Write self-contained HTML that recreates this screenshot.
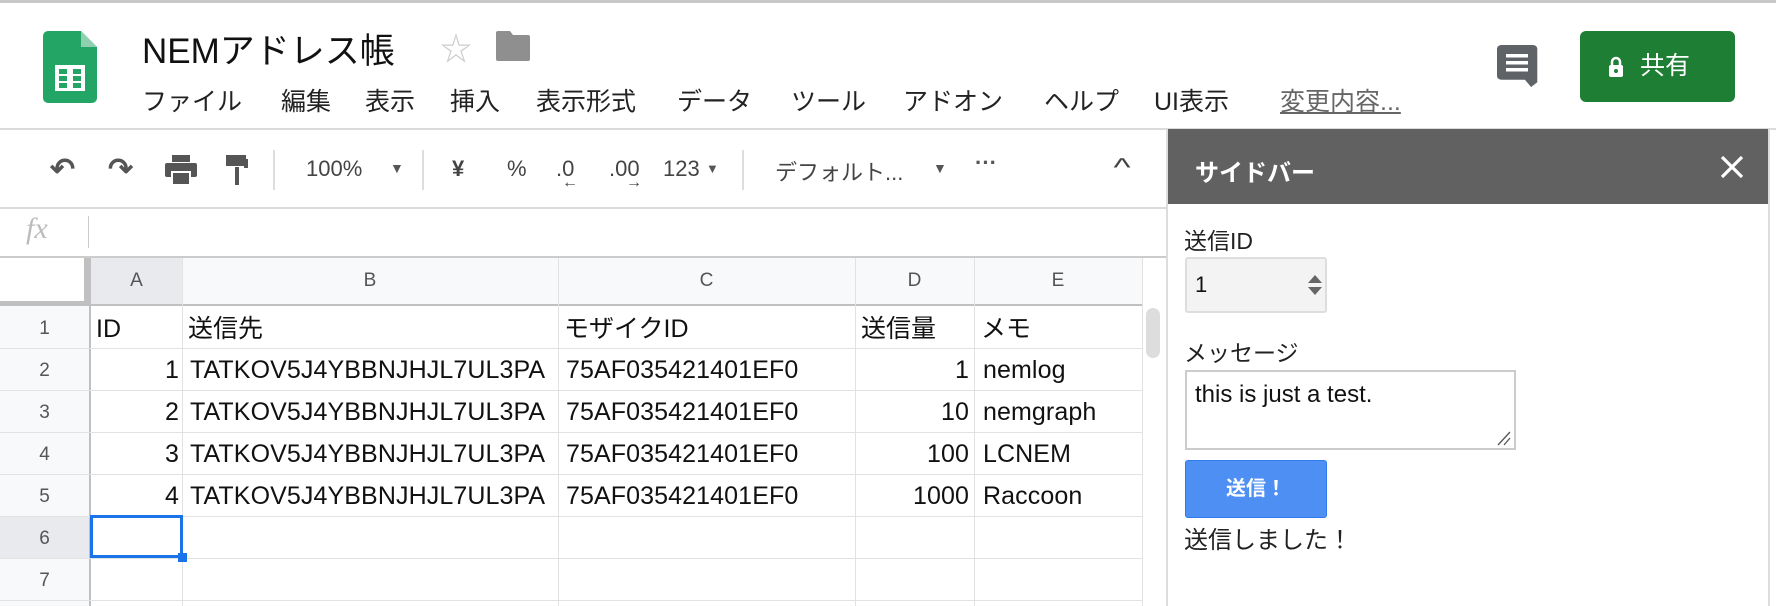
<!DOCTYPE html>
<html><head><meta charset="utf-8"><style>
*{box-sizing:border-box;margin:0;padding:0}
body{width:1776px;height:606px;overflow:hidden;background:#fff;font-family:"Liberation Sans","Noto Sans CJK JP",sans-serif;color:#222;position:relative}
.a{position:absolute;white-space:nowrap}
.menu span{position:absolute;top:82px;font-size:25px;color:#222}
.cell{position:absolute;font-size:23px;color:#111;line-height:42px;overflow:hidden;white-space:nowrap}
.n{font-size:25px;letter-spacing:0.1px}
.hl{position:absolute;background:#e2e2e2}
</style></head><body>
<div class="a" style="left:0;top:0;width:1776px;height:3px;background:#c8c8c8"></div>
<svg class="a" style="left:43px;top:31px" width="54" height="72" viewBox="0 0 54 72">
<path d="M5 0H38L54 16V67a5 5 0 0 1-5 5H5a5 5 0 0 1-5-5V5a5 5 0 0 1 5-5z" fill="#23a566"/>
<path d="M38 0V16H54z" fill="#8ed1b1"/>
<rect x="12" y="34" width="30" height="26" fill="#fff"/>
<rect x="16" y="38" width="8" height="5" fill="#23a566"/><rect x="30" y="38" width="8" height="5" fill="#23a566"/>
<rect x="16" y="45" width="8" height="5" fill="#23a566"/><rect x="30" y="45" width="8" height="5" fill="#23a566"/>
<rect x="16" y="52" width="8" height="5" fill="#23a566"/><rect x="30" y="52" width="8" height="5" fill="#23a566"/>
</svg>
<div class="a" style="left:142px;top:23px;font-size:35px;color:#111">NEMアドレス帳</div>
<div class="a" style="left:440px;top:24px;font-size:32px;color:#ccc">☆</div>
<svg class="a" style="left:496px;top:31px" width="34" height="30" viewBox="0 0 34 30"><path d="M2 0h12l3 4h15a2 2 0 0 1 2 2v22a2 2 0 0 1-2 2H2a2 2 0 0 1-2-2V2a2 2 0 0 1 2-2z" fill="#8f8f8f"/></svg>
<div class="menu">
<span style="left:142px">ファイル</span><span style="left:281px">編集</span><span style="left:365px">表示</span><span style="left:450px">挿入</span><span style="left:536px">表示形式</span><span style="left:677px">データ</span><span style="left:791px">ツール</span><span style="left:903px">アドオン</span><span style="left:1044px">ヘルプ</span><span style="left:1154px">UI表示</span>
<span style="left:1280px;color:#666;text-decoration:underline">変更内容...</span>
</div>
<svg class="a" style="left:1497px;top:45px" width="42" height="42" viewBox="0 0 42 42"><path d="M3 0h20a3 3 0 0 1 3 3v28l-4 4-4-6H3a3 3 0 0 1-3-3V3a3 3 0 0 1 3-3z" fill="#5f6368" transform="scale(1.55,1.2)"/><rect x="9" y="9" width="22" height="3.5" fill="#fff"/><rect x="9" y="16" width="22" height="3.5" fill="#fff"/><rect x="9" y="23" width="22" height="3.5" fill="#fff"/></svg>
<div class="a" style="left:1580px;top:31px;width:155px;height:71px;background:#1e7e34;border-radius:6px;color:#fff;font-size:25px;line-height:71px;padding-left:60px">共有</div>
<svg class="a" style="left:1608px;top:56px" width="16" height="21" viewBox="0 0 16 21"><path d="M4 9V6a4 4 0 0 1 8 0v3" stroke="#fff" stroke-width="2.5" fill="none"/><rect x="1" y="9" width="14" height="12" rx="2" fill="#fff"/><circle cx="8" cy="15" r="2" fill="#1e7e34"/></svg>
<div class="a" style="left:0;top:128px;width:1776px;height:2px;background:#dadada"></div>
<div class="a" style="left:50px;top:152px;font-size:30px;color:#555;font-weight:bold">↶</div>
<div class="a" style="left:108px;top:152px;font-size:30px;color:#555;font-weight:bold">↷</div>
<svg class="a" style="left:165px;top:155px" width="32" height="30"><rect x="7" y="0" width="18" height="7" fill="#555"/><rect x="0" y="8" width="32" height="14" rx="2" fill="#555"/><rect x="7" y="17" width="18" height="13" fill="#555" stroke="#fff" stroke-width="2"/></svg>
<svg class="a" style="left:226px;top:155px" width="22" height="30"><rect x="0" y="0" width="20" height="11" fill="#555"/><rect x="18" y="4" width="4" height="9" fill="#555"/><rect x="9" y="12" width="4" height="18" fill="#555"/></svg>
<div class="a" style="left:273px;top:150px;width:2px;height:40px;background:#ddd"></div>
<div class="a" style="left:306px;top:156px;font-size:22px;color:#444">100%</div>
<div class="a" style="left:390px;top:160px;font-size:14px;color:#555">▼</div>
<div class="a" style="left:422px;top:150px;width:2px;height:40px;background:#ddd"></div>
<div class="a" style="left:452px;top:156px;font-size:22px;color:#444;font-weight:bold">¥</div>
<div class="a" style="left:507px;top:156px;font-size:22px;color:#444">%</div>
<div class="a" style="left:556px;top:156px;font-size:22px;color:#444">.0</div>
<div class="a" style="left:562px;top:174px;font-size:16px;color:#444">←</div>
<div class="a" style="left:609px;top:156px;font-size:22px;color:#444">.00</div>
<div class="a" style="left:626px;top:174px;font-size:16px;color:#444">→</div>
<div class="a" style="left:663px;top:156px;font-size:22px;color:#444">123</div>
<div class="a" style="left:706px;top:161px;font-size:13px;color:#555">▼</div>
<div class="a" style="left:742px;top:150px;width:2px;height:40px;background:#ddd"></div>
<div class="a" style="left:775px;top:155px;font-size:22px;color:#444">デフォルト...</div>
<div class="a" style="left:933px;top:160px;font-size:14px;color:#555">▼</div>
<div class="a" style="left:975px;top:150px;font-size:22px;color:#555;font-weight:bold">···</div>
<div class="a" style="left:1116px;top:152px;font-size:26px;color:#444;transform:scaleX(1.4)">^</div>
<div class="a" style="left:0;top:207px;width:1167px;height:2px;background:#dadada"></div>
<div class="a" style="left:26px;top:212px;font-size:30px;color:#bbb;font-family:'Liberation Serif',serif;font-style:italic">fx</div>
<div class="a" style="left:88px;top:216px;width:1px;height:32px;background:#ccc"></div>
<div class="a" style="left:0;top:256px;width:1167px;height:2px;background:#ccc"></div>
<div class="a" style="left:0;top:258px;width:1142px;height:48px;background:#f8f9fa"></div>
<div class="a" style="left:0;top:306px;width:89px;height:300px;background:#f8f9fa"></div>
<div class="a" style="left:91px;top:258px;width:91px;height:48px;background:#e8eaed"></div>
<div class="a" style="left:0;top:516px;width:89px;height:42px;background:#e8eaed"></div>
<div class="a" style="left:0;top:258px;width:89px;height:48px;background:#fff;border-right:5px solid #c0c0c0;border-bottom:5px solid #c0c0c0"></div>
<div class="a" style="left:0;top:304px;width:1142px;height:2px;background:#c0c0c0"></div>
<div class="a" style="left:89px;top:258px;width:2px;height:348px;background:#c0c0c0"></div>
<div class="hl" style="left:182px;top:258px;width:1px;height:348px"></div>
<div class="hl" style="left:558px;top:258px;width:1px;height:348px"></div>
<div class="hl" style="left:855px;top:258px;width:1px;height:348px"></div>
<div class="hl" style="left:974px;top:258px;width:1px;height:348px"></div>
<div class="hl" style="left:1142px;top:258px;width:1px;height:348px"></div>
<div class="hl" style="left:0;top:348px;width:1142px;height:1px"></div>
<div class="hl" style="left:0;top:390px;width:1142px;height:1px"></div>
<div class="hl" style="left:0;top:432px;width:1142px;height:1px"></div>
<div class="hl" style="left:0;top:474px;width:1142px;height:1px"></div>
<div class="hl" style="left:0;top:516px;width:1142px;height:1px"></div>
<div class="hl" style="left:0;top:558px;width:1142px;height:1px"></div>
<div class="hl" style="left:0;top:600px;width:1142px;height:1px"></div>
<div class="a" style="left:91px;top:270px;width:91px;text-align:center;font-size:19px;color:#555">A</div>
<div class="a" style="left:182px;top:270px;width:376px;text-align:center;font-size:19px;color:#555">B</div>
<div class="a" style="left:558px;top:270px;width:297px;text-align:center;font-size:19px;color:#555">C</div>
<div class="a" style="left:855px;top:270px;width:119px;text-align:center;font-size:19px;color:#555">D</div>
<div class="a" style="left:974px;top:270px;width:168px;text-align:center;font-size:19px;color:#555">E</div>
<div class="a" style="left:0;top:318px;width:89px;text-align:center;font-size:19px;color:#555">1</div>
<div class="a" style="left:0;top:360px;width:89px;text-align:center;font-size:19px;color:#555">2</div>
<div class="a" style="left:0;top:402px;width:89px;text-align:center;font-size:19px;color:#555">3</div>
<div class="a" style="left:0;top:444px;width:89px;text-align:center;font-size:19px;color:#555">4</div>
<div class="a" style="left:0;top:486px;width:89px;text-align:center;font-size:19px;color:#555">5</div>
<div class="a" style="left:0;top:528px;width:89px;text-align:center;font-size:19px;color:#555">6</div>
<div class="a" style="left:0;top:570px;width:89px;text-align:center;font-size:19px;color:#555">7</div>
<div class="cell" style="left:96px;top:308px;font-size:25px">ID</div>
<div class="cell" style="left:188px;top:308px;font-size:25px">送信先</div>
<div class="cell" style="left:564px;top:308px;font-size:25px">モザイクID</div>
<div class="cell" style="left:861px;top:308px;font-size:25px">送信量</div>
<div class="cell" style="left:981px;top:308px;font-size:25px">メモ</div>
<div class="cell n" style="left:91px;top:349px;width:88px;text-align:right">1</div>
<div class="cell n" style="left:91px;top:391px;width:88px;text-align:right">2</div>
<div class="cell n" style="left:91px;top:433px;width:88px;text-align:right">3</div>
<div class="cell n" style="left:91px;top:475px;width:88px;text-align:right">4</div>
<div class="cell n" style="left:190px;top:349px;width:367px">TATKOV5J4YBBNJHJL7UL3PA</div>
<div class="cell n" style="left:190px;top:391px;width:367px">TATKOV5J4YBBNJHJL7UL3PA</div>
<div class="cell n" style="left:190px;top:433px;width:367px">TATKOV5J4YBBNJHJL7UL3PA</div>
<div class="cell n" style="left:190px;top:475px;width:367px">TATKOV5J4YBBNJHJL7UL3PA</div>
<div class="cell n" style="left:566px;top:349px">75AF035421401EF0</div>
<div class="cell n" style="left:566px;top:391px">75AF035421401EF0</div>
<div class="cell n" style="left:566px;top:433px">75AF035421401EF0</div>
<div class="cell n" style="left:566px;top:475px">75AF035421401EF0</div>
<div class="cell n" style="left:855px;top:349px;width:114px;text-align:right">1</div>
<div class="cell n" style="left:855px;top:391px;width:114px;text-align:right">10</div>
<div class="cell n" style="left:855px;top:433px;width:114px;text-align:right">100</div>
<div class="cell n" style="left:855px;top:475px;width:114px;text-align:right">1000</div>
<div class="cell n" style="left:983px;top:349px">nemlog</div>
<div class="cell n" style="left:983px;top:391px">nemgraph</div>
<div class="cell n" style="left:983px;top:433px">LCNEM</div>
<div class="cell n" style="left:983px;top:475px">Raccoon</div>
<div class="a" style="left:90px;top:515px;width:93px;height:43px;border:3px solid #1a73e8"></div>
<div class="a" style="left:178px;top:553px;width:9px;height:9px;background:#1a73e8"></div>
<div class="a" style="left:1146px;top:308px;width:14px;height:50px;background:#ddd;border-radius:7px"></div>
<div class="a" style="left:1166px;top:129px;width:2px;height:477px;background:#ddd"></div>
<div class="a" style="left:1768px;top:129px;width:2px;height:477px;background:#ddd"></div>
<div class="a" style="left:1168px;top:129px;width:600px;height:75px;background:#616161"></div>
<div class="a" style="left:1195px;top:153px;font-size:24px;color:#fff;font-weight:bold">サイドバー</div>
<svg class="a" style="left:1720px;top:155px" width="24" height="24"><path d="M2 2L22 22M22 2L2 22" stroke="#fff" stroke-width="3.2"/></svg>
<div class="a" style="left:1184px;top:222px;font-size:23px;color:#222">送信ID</div>
<div class="a" style="left:1185px;top:257px;width:142px;height:56px;background:#f3f3f3;border:2px solid #ddd;border-radius:3px"></div>
<div class="a" style="left:1195px;top:272px;font-size:22px;color:#111">1</div>
<svg class="a" style="left:1307px;top:273px" width="16" height="24"><path d="M1 10L8 2L15 10z M1 14L8 22L15 14z" fill="#666"/></svg>
<div class="a" style="left:1184px;top:334px;font-size:23px;color:#222">メッセージ</div>
<div class="a" style="left:1185px;top:370px;width:331px;height:80px;border:2px solid #ccc"></div>
<div class="a" style="left:1195px;top:381px;font-size:24px;color:#111">this is just a test.</div>
<svg class="a" style="left:1496px;top:429px" width="16" height="18"><path d="M2 16L14 3M8 16L14 9" stroke="#555" stroke-width="1.3"/></svg>
<div class="a" style="left:1185px;top:460px;width:142px;height:58px;background:#4d8ff2;border:1px solid #3079ed;border-radius:3px;color:#fff;font-weight:bold;font-size:20px;text-align:center;line-height:56px">送信！</div>
<div class="a" style="left:1184px;top:520px;font-size:24px;color:#222">送信しました！</div>
</body></html>
